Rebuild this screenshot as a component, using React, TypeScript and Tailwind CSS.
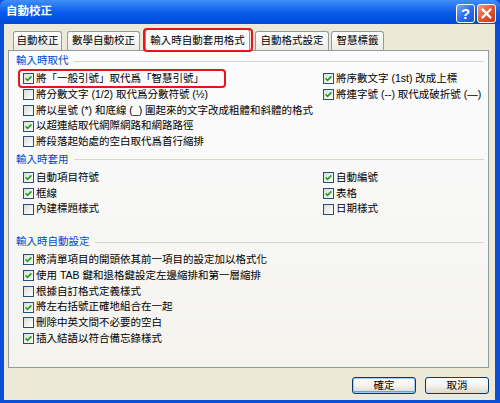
import React from 'react';

// Windows XP 風格「自動校正」對話框

function Check({ on }: { on?: boolean }) {
  return (
    <span className="flex h-[11px] w-[11px] shrink-0 items-center justify-center border border-[#1c5180] bg-gradient-to-br from-[#dcdcd7] to-white">
      {on && (
        <svg viewBox="0 0 7 7" className="h-[7px] w-[7px]">
          <path d="M0.6 3.4 L2.6 5.4 L6.4 1.4" stroke="#21a121" strokeWidth="1.7" fill="none" />
        </svg>
      )}
    </span>
  );
}

function Item({ on, label }: { on?: boolean; label: string }) {
  return (
    <div className="flex items-center gap-[2px] whitespace-nowrap">
      <Check on={on} />
      <span>{label}</span>
    </div>
  );
}

function Header({ title }: { title: string }) {
  return (
    <div className="flex h-[14px] items-center gap-[5px] pl-[7px] pr-[4px] text-[#0046d5]">
      <span className="whitespace-nowrap">{title}</span>
      <div className="flex-1 border-t border-[#d8d6cb]" />
    </div>
  );
}

function Row({ left, right, mark }: { left: [boolean, string]; right?: [boolean, string]; mark?: boolean }) {
  return (
    <div className="relative flex h-[15.75px] items-center pl-[14px]">
      <div className="w-[300px]">
        <Item on={left[0]} label={left[1]} />
      </div>
      {right && <Item on={right[0]} label={right[1]} />}
      {mark && (
        <div className="absolute -top-[2px] -bottom-[1px] left-[9px] w-[208px] rounded-[4px] border-2 border-[#e8141b]" />
      )}
    </div>
  );
}

function Tab({ label, w, ml, active }: { label: string; w: string; ml: string; active?: boolean }) {
  if (active) {
    return (
      <div className={`relative z-10 -mb-px flex h-[22px] items-center justify-center rounded-t-[3px] border border-b-0 border-[#919b9c] bg-[#fcfcfe] ${w} ${ml}`}>
        {label}
        <div className="absolute -left-[3px] -right-[4px] -top-[2px] -bottom-[1px] rounded-[4px] border-2 border-[#e8141b]" />
      </div>
    );
  }
  return (
    <div className={`flex h-[19px] items-center justify-center rounded-t-[3px] border border-b-0 border-[#919b9c] bg-gradient-to-b from-white to-[#ecebe5] ${w} ${ml}`}>
      {label}
    </div>
  );
}

function TitleButton({ kind }: { kind: 'help' | 'close' }) {
  const bg =
    kind === 'help'
      ? 'bg-gradient-to-br from-[#7ba9f7] via-[#2e6ef0] to-[#1c52d6]'
      : 'bg-gradient-to-br from-[#f0a080] via-[#e2552e] to-[#c33a14]';
  return (
    <div className={`flex h-[19px] w-[19px] items-center justify-center rounded-[3px] border border-white ${bg}`}>
      {kind === 'help' ? (
        <span className="font-['Liberation_Sans',sans-serif] text-[15px] font-bold leading-none text-white">?</span>
      ) : (
        <svg viewBox="0 0 10 10" className="h-[11px] w-[11px]">
          <path d="M1.5 1.5 L8.5 8.5 M8.5 1.5 L1.5 8.5" stroke="white" strokeWidth="2" strokeLinecap="square" />
        </svg>
      )}
    </div>
  );
}

function Button({ label, primary }: { label: string; primary?: boolean }) {
  return (
    <div
      className={`flex h-[17px] w-[64px] items-center justify-center rounded-[3px] border border-[#003c74] bg-gradient-to-b from-white via-[#f4f3ee] to-[#dcd8cc] ${
        primary ? 'shadow-[inset_0_0_0_1px_#a8c8f5,inset_0_-1px_0_1px_#6b9ee8]' : ''
      }`}
    >
      {label}
    </div>
  );
}

export default function App() {
  return (
    <div className="flex h-[403px] w-[500px] flex-col bg-[#0a4fd8] font-['Liberation_Sans','Noto_Sans_CJK_TC',sans-serif] text-[10.5px] text-black">
      {/* 標題列 */}
      <div className="flex h-[24px] shrink-0 items-center justify-between rounded-t-[6px] bg-gradient-to-b from-[#3f8ef8] via-[#0a5de8] to-[#0049da] pl-[6px] pr-[4px]">
        <span className="text-[11.5px] font-bold text-white">自動校正</span>
        <div className="mt-[2px] flex gap-[2px]">
          <TitleButton kind="help" />
          <TitleButton kind="close" />
        </div>
      </div>

      {/* 內容 */}
      <div className="ml-[4px] mr-[5px] mb-[3px] flex flex-1 flex-col bg-[#ece9d8] pl-[4px] pr-[6px]">
        <div className="flex h-[26px] items-end">
          <Tab label="自動校正" w="w-[49px]" ml="ml-[5px]" />
          <Tab label="數學自動校正" w="w-[73px]" ml="ml-[5px]" />
          <Tab label="輸入時自動套用格式" w="w-[105px]" ml="ml-[5px]" active />
          <Tab label="自動格式設定" w="w-[74px]" ml="ml-[5px]" />
          <Tab label="智慧標籤" w="w-[53px]" ml="ml-[2px]" />
        </div>

        <div className="h-[318px] border border-[#919b9c] bg-gradient-to-b from-[#fcfcfe] to-[#f4f3ee] pt-[3px]">
          <Header title="輸入時取代" />
          <div className="mt-[3px]">
            <Row mark left={[true, '將「一般引號」取代爲「智慧引號」']} right={[true, '將序數文字 (1st) 改成上標']} />
            <Row left={[false, '將分數文字 (1/2) 取代爲分數符號 (½)']} right={[true, '將連字號 (--) 取代成破折號 (—)']} />
            <Row left={[false, '將以星號 (*) 和底線 (_) 圍起來的文字改成粗體和斜體的格式']} />
            <Row left={[true, '以超連結取代網際網路和網路路徑']} />
            <Row left={[false, '將段落起始處的空白取代爲首行縮排']} />
          </div>

          <div className="mt-[3px]">
            <Header title="輸入時套用" />
          </div>
          <div className="mt-[3px]">
            <Row left={[true, '自動項目符號']} right={[true, '自動編號']} />
            <Row left={[true, '框線']} right={[true, '表格']} />
            <Row left={[false, '內建標題樣式']} right={[false, '日期樣式']} />
          </div>

          <div className="mt-[18px]">
            <Header title="輸入時自動設定" />
          </div>
          <div className="mt-[3px]">
            <Row left={[true, '將清單項目的開頭依其前一項目的設定加以格式化']} />
            <Row left={[true, '使用 TAB 鍵和退格鍵設定左邊縮排和第一層縮排']} />
            <Row left={[false, '根據自訂格式定義樣式']} />
            <Row left={[true, '將左右括號正確地組合在一起']} />
            <Row left={[false, '刪除中英文間不必要的空白']} />
            <Row left={[true, '插入結語以符合備忘錄樣式']} />
          </div>
        </div>

        <div className="mt-[9px] flex justify-end gap-[9px]">
          <Button label="確定" primary />
          <Button label="取消" />
        </div>
      </div>
    </div>
  );
}
